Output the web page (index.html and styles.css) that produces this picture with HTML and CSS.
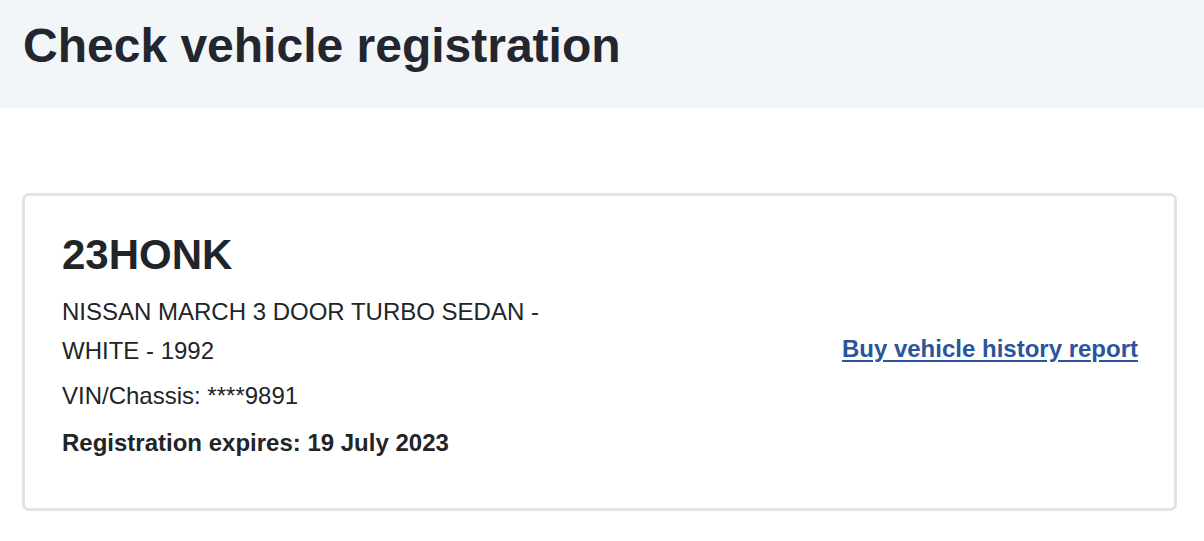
FILE: index.html
```html
<!DOCTYPE html>
<html lang="en">
<head>
    <meta charset="UTF-8">
    <meta name="viewport" content="width=device-width, initial-scale=1.0">
    <title>Check vehicle registration</title>
    <link rel="stylesheet" href="styles.css">
</head>
<body>
    <div class="page-header">
        <h1>Check vehicle registration</h1>
    </div>

    <div class="content">
        <div class="vehicle-card">
            <div class="vehicle-details">
                <h2>23HONK</h2>
                <p class="description">NISSAN MARCH 3 DOOR TURBO SEDAN - WHITE - 1992</p>
                <p class="vin">VIN/Chassis: ****9891</p>
                <p class="expiry">Registration expires: 19 July 2023</p>
            </div>
            <div class="vehicle-actions">
                <a href="#">Buy vehicle history report</a>
            </div>
        </div>
    </div>
</body>
</html>
```

FILE: styles.css
```css
body {
    font-family: "Liberation Sans", Arial, sans-serif;
    margin: 0;
    padding: 0;
    background-color: #ffffff;
    color: #212529;
}

.page-header {
    background-color: #f3f6f9;
    height: 108px;
    padding: 17px 23px 0;
    box-sizing: border-box;
}

.page-header h1 {
    margin: 0;
    font-size: 48px;
    line-height: 1.2;
    font-weight: bold;
    color: #23262e;
}

.content {
    padding: 85px 27px 0 22px;
}

.vehicle-card {
    display: flex;
    align-items: center;
    border: 3px solid #e0e4e8;
    border-radius: 7px;
    padding: 33px 36px 45px 37px;
    height: 318px;
    box-sizing: border-box;
}

.vehicle-details {
    width: 50%;
}

.vehicle-details h2 {
    margin: 0 0 12px;
    font-size: 42px;
    line-height: 1.2;
    font-weight: bold;
}

.vehicle-details p {
    margin: 0;
    font-size: 24px;
    line-height: 39px;
}

.description {
    padding-right: 10px;
}

.vin {
    margin-top: 6px !important;
}

.expiry {
    margin-top: 8px !important;
    font-weight: bold;
}

.vehicle-actions {
    width: 50%;
    text-align: right;
    font-size: 24px;
    line-height: 39px;
    padding-top: 4px;
}

.vehicle-actions a {
    color: #2b559b;
    font-weight: bold;
    text-decoration: underline;
    text-underline-offset: 3px;
}
```
